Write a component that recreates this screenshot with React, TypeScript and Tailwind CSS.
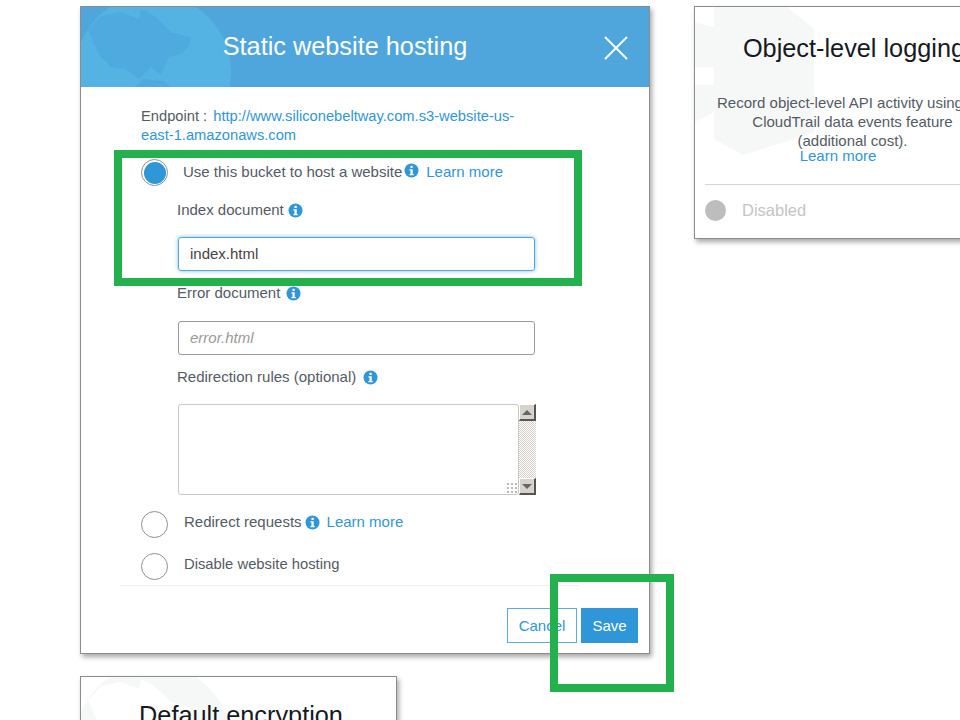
import { X } from "lucide-react";

function InfoIcon({ className = "" }: { className?: string }) {
  return (
    <svg viewBox="0 0 16 16" className={`w-[15px] h-[15px] shrink-0 ${className}`}>
      <circle cx="8" cy="8" r="7.5" fill="#2f96d8" />
      <rect x="6.9" y="3" width="2.4" height="2.3" fill="#fff" />
      <path d="M5.8 6.6h3.5v5h1.1v1.4H5.8v-1.4h1.1V8H5.8z" fill="#fff" />
    </svg>
  );
}

function Radio({ checked = false }: { checked?: boolean }) {
  return (
    <span className="w-[27px] h-[27px] rounded-full border border-[#8f8f8f] bg-white flex items-center justify-center shrink-0">
      {checked && <span className="w-[22px] h-[22px] rounded-full bg-[#2f96d8]" />}
    </span>
  );
}

function Globe({ fill, land }: { fill: string; land: string }) {
  return (
    <svg viewBox="0 0 150 80" className="absolute left-0 top-0 w-[150px] h-[80px]">
      <circle cx="72" cy="65" r="78" fill={fill} />
      <path
        d="M7 23 L20 9 L40 5 L58 12 L60 2 L72 8 L80 15 L90 25 L110 31 L108 39 L100 47 L88 50 L80 68 L70 60 L58 72 L44 62 L30 60 L18 48 Z"
        fill={land}
      />
      <path d="M54 80 L62 72 L82 74 L90 80 Z" fill={land} />
    </svg>
  );
}

function ScrollArrow({ up }: { up?: boolean }) {
  return (
    <span className="h-[17px] bg-[#d6d3cb] border-r-2 border-b-2 border-r-[#555] border-b-[#555] border-t border-l border-t-white border-l-white flex items-center justify-center">
      <span
        className={
          up
            ? "w-0 h-0 border-x-[5px] border-x-transparent border-b-[5px] border-b-[#666]"
            : "w-0 h-0 border-x-[5px] border-x-transparent border-t-[5px] border-t-[#666]"
        }
      />
    </span>
  );
}

export default function App() {
  return (
    <div className="relative h-[720px] w-[960px] overflow-hidden bg-white font-['Liberation_Sans',Arial,sans-serif] text-[15px] leading-[22px] text-[#545b64]">
      <div className="flex items-start pl-[80px] pt-[6px] gap-[44px]">
        {/* left column */}
        <div className="w-[570px] shrink-0">
          <div className="h-[648px] border border-[#8c8c8c] bg-white shadow-[2px_3px_5px_rgba(0,0,0,0.35)]">
            <div className="relative h-[80px] bg-[#4ea6dc] overflow-hidden flex items-center justify-center pr-[40px]">
              <Globe fill="#54b3e3" land="#4faadf" />
              <h2 className="relative text-[25.3px] text-white pb-[2px]">Static website hosting</h2>
              <X className="absolute right-[12px] top-[20px] text-white" size={42} strokeWidth={1.1} />
            </div>
            <div className="pl-[60px] pt-[20px]">
              <p className="w-[400px] leading-[19px] text-[14.7px]">
                Endpoint :{" "}
                <a className="ml-[2px] text-[#2f96d8]">http://www.siliconebeltway.com.s3-website-us-east-1.amazonaws.com</a>
              </p>
              <div className="mt-[14px] flex items-center">
                <Radio checked />
                <span className="ml-[15px] pb-[2px]">Use this bucket to host a website</span>
                <InfoIcon className="ml-[2px] -mt-[4px]" />
                <a className="ml-[7px] pb-[2px] text-[#2f96d8]">Learn more</a>
              </div>
              <div className="ml-[36px] w-[358px]">
                <div className="mt-[12px] flex items-center pt-[1px]">
                  <span>Index document</span>
                  <InfoIcon className="ml-[4px]" />
                </div>
                <div className="ml-[1px] mt-[16px] h-[34px] rounded-[3px] border border-[#4fa8e0] shadow-[0_0_4px_rgba(47,150,216,0.6)] pl-[11px] flex items-center text-[#444]">
                  index.html
                </div>
                <div className="mt-[11px] flex items-center">
                  <span>Error document</span>
                  <InfoIcon className="ml-[6px]" />
                </div>
                <div className="ml-[1px] mt-[17px] h-[34px] rounded-[3px] border border-[#9a9a9a] pl-[11px] flex items-center italic text-[#9a9a9a]">
                  error.html
                </div>
                <div className="mt-[11px] flex items-center">
                  <span>Redirection rules (optional)</span>
                  <InfoIcon className="ml-[7px]" />
                </div>
                <div className="ml-[1px] mt-[16px] flex w-[358px]">
                  <div className="relative w-[341px] h-[91px] shrink-0 rounded-[3px] border border-[#c8c8c8]">
                    <span className="absolute right-[1px] bottom-[1px] w-[11px] h-[11px] bg-[radial-gradient(#bbb_1px,transparent_1px)] bg-[length:4px_4px]" />
                  </div>
                  <div className="w-[17px] h-[91px] shrink-0 flex flex-col justify-between bg-[repeating-conic-gradient(#d4d0c8_0%_25%,#fff_0%_50%)] bg-[length:2px_2px]">
                    <ScrollArrow up />
                    <ScrollArrow />
                  </div>
                </div>
              </div>
              <div className="mt-[16px] flex items-center">
                <Radio />
                <span className="ml-[16px] pb-[5px]">Redirect requests</span>
                <InfoIcon className="ml-[3px] -mt-[5px]" />
                <a className="ml-[7px] pb-[5px] text-[#2f96d8]">Learn more</a>
              </div>
              <div className="mt-[15px] flex items-center">
                <Radio />
                <span className="ml-[16px] pb-[5px] text-[14.8px]">Disable website hosting</span>
              </div>
            </div>
            <div className="ml-[40px] mr-[70px] mt-[5px] border-t border-[#efefef]" />
            <div className="flex justify-end gap-[4px] pr-[11px] pt-[22px]">
              <button className="w-[70px] h-[35px] border border-[#56ace3] text-[#2f96d8]">Cancel</button>
              <button className="w-[57px] h-[35px] bg-[#2f96d8] text-white">Save</button>
            </div>
          </div>

          <div className="relative mt-[22px] w-[317px] h-[100px] border border-[#8c8c8c] bg-white shadow-[2px_3px_5px_rgba(0,0,0,0.35)] overflow-hidden">
            <Globe fill="#f6f8f7" land="#ffffff" />
            <h2 className="relative text-center text-[25.3px] text-[#16191f] pt-[27px] pl-[5px]">Default encryption</h2>
          </div>
        </div>

        {/* right column */}
        <div className="relative w-[330px] h-[233px] shrink-0 border border-[#8c8c8c] bg-white shadow-[2px_3px_5px_rgba(0,0,0,0.35)] overflow-hidden">
          <svg viewBox="0 0 120 150" className="absolute left-0 top-0 w-[120px] h-[150px]">
            <path d="M19 0 H92 L119 22 V126 L48 148 L19 132 V105 L0 115 V78 H19 V60 H0 V15 L19 20 Z" fill="#f6f8f7" />
          </svg>
          <div className="relative w-[315px] text-center">
            <h2 className="text-[25.3px] text-[#16191f] pt-[30px] pl-[3px]">Object-level logging</h2>
            <p className="mt-[34px] leading-[19px]">
              Record object-level API activity using the
              <br />
              CloudTrail data events feature
              <br />
              (additional cost).
            </p>
            <a className="block -mt-[4px] pr-[29px] leading-[19px] text-[#2f96d8]">Learn more</a>
          </div>
          <div className="relative ml-[10px] mt-[19px] border-t border-[#d5d5d5] pt-[14px] flex items-center">
            <span className="w-[21px] h-[21px] rounded-full bg-[#bdbdbd]" />
            <span className="ml-[16px] text-[16.5px] text-[#c4c4c4]">Disabled</span>
          </div>
        </div>
      </div>

      {/* annotation rectangles */}
      <div className="absolute left-[114px] top-[150px] w-[468px] h-[136px] border-[8px] border-[#22b14c]" />
      <div className="absolute left-[550px] top-[574px] w-[124px] h-[118px] border-[8px] border-[#22b14c]" />
    </div>
  );
}
